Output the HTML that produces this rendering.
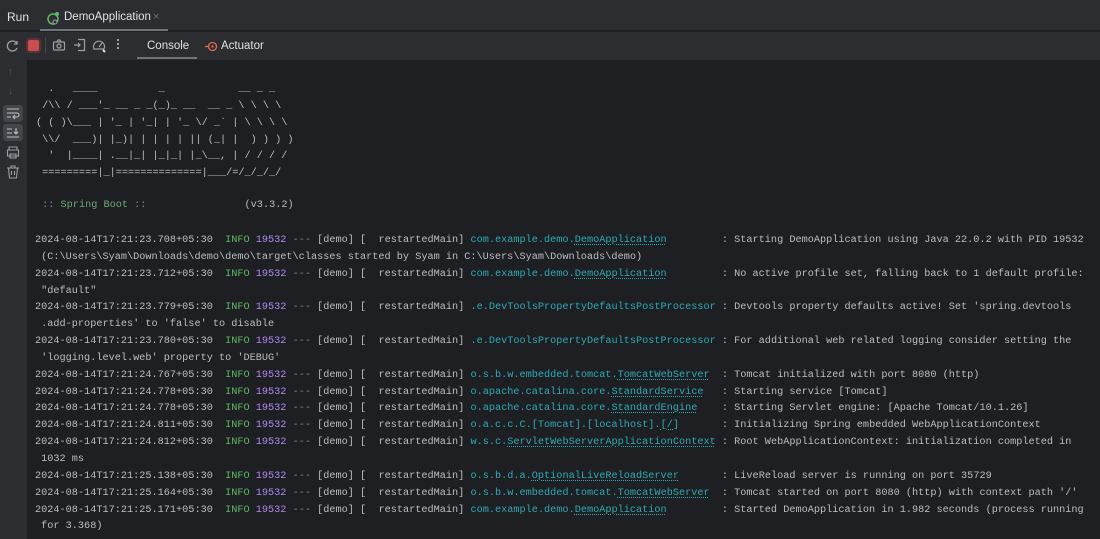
<!DOCTYPE html>
<html><head><meta charset="utf-8"><style>
*{margin:0;padding:0;box-sizing:border-box}
html,body{width:1100px;height:539px;overflow:hidden;background:#1e1f22}
body{position:relative;font-family:"Liberation Sans",sans-serif;color:#dfe1e5}
.hdr{position:absolute;left:0;top:0;width:1100px;height:31px;background:#2b2d30;border-bottom:1px solid #1e1f22}
.tb{position:absolute;left:0;top:32px;width:1100px;height:28px;background:#2b2d30}
.gut{position:absolute;left:0;top:60px;width:27px;height:479px;background:#2b2d30}
pre{position:absolute;font-family:"Liberation Mono",monospace;font-size:10.23px;line-height:16.85px;color:#bcbec4;white-space:pre}
.i{color:#5fb865}.p{color:#b189f5}.c{color:#2aacb8}.d{color:#868a91}.g{color:#6aab73}
.u{text-decoration:underline dotted;text-underline-offset:2px}
svg{position:absolute}
</style></head><body>
<div class="hdr"></div>
<div style="position:absolute;left:7px;top:10px;font-size:12px;color:#dfe1e5">Run</div>
<svg style="left:45px;top:10px" width="16" height="16" viewBox="0 0 16 16"><circle cx="8" cy="9" r="5" fill="none" stroke="#5fb865" stroke-width="1.5"/><circle cx="12" cy="4" r="2" fill="#5fb865"/><circle cx="10" cy="12" r="2" fill="#2b2d30" stroke="#9da0a8"/></svg>
<div style="position:absolute;left:64px;top:11px;font-size:11.5px;color:#dfe1e5">DemoApplication</div>
<div style="position:absolute;left:153px;top:11px;font-size:11px;color:#6f737a">×</div>
<div style="position:absolute;left:40px;top:29px;width:128px;height:2px;background:#6f737a"></div>
<div class="tb"></div>
<svg style="left:6px;top:39px" width="14" height="14" viewBox="0 0 14 14"><path d="M11 5A5 5 0 1 0 11 9" fill="none" stroke="#9da0a8" stroke-width="1.3"/><path d="M11 2v3H8" fill="none" stroke="#9da0a8" stroke-width="1.3"/></svg>
<div style="position:absolute;left:28px;top:40px;width:11px;height:11px;background:#c94f4f;border-radius:2px;box-shadow:0 0 0 2px #5a3236"></div>
<div style="position:absolute;left:45px;top:37px;width:1px;height:16px;background:#43454a"></div>
<svg style="left:52px;top:38px" width="14" height="14" viewBox="0 0 14 14"><rect x="1.5" y="4" width="11" height="8" rx="1" fill="none" stroke="#9da0a8" stroke-width="1.2"/><circle cx="7" cy="8" r="2" fill="none" stroke="#9da0a8" stroke-width="1.2"/><path d="M5 4l1-2h2l1 2" fill="none" stroke="#9da0a8" stroke-width="1.2"/></svg>
<svg style="left:73px;top:38px" width="14" height="14" viewBox="0 0 14 14"><path d="M5 1.5h6.5v11H5M1 7h6M5 5l2 2-2 2" fill="none" stroke="#9da0a8" stroke-width="1.2"/></svg>
<svg style="left:92px;top:38px" width="15" height="15" viewBox="0 0 15 15"><path d="M2 11a5.5 5.5 0 1 1 10 0z" fill="none" stroke="#9da0a8" stroke-width="1.2"/><path d="M7 9l3-4" stroke="#9da0a8" stroke-width="1.2"/><path d="M11 12l2 2" stroke="#dfe1e5" stroke-width="2"/></svg>
<div style="position:absolute;left:117px;top:39px;width:2px;font-size:0">
<div style="width:2px;height:2px;background:#9da0a8;margin-bottom:2px"></div><div style="width:2px;height:2px;background:#9da0a8;margin-bottom:2px"></div><div style="width:2px;height:2px;background:#9da0a8"></div></div>
<div style="position:absolute;left:147px;top:40px;font-size:11.5px;color:#dfe1e5">Console</div>
<div style="position:absolute;left:137px;top:57px;width:60px;height:2px;background:#6f737a"></div>
<svg style="left:205px;top:40px" width="13" height="13" viewBox="0 0 13 13"><path d="M0 6.5h4" stroke="#e06c4f" stroke-width="1.3"/><circle cx="7.5" cy="6.5" r="4" fill="none" stroke="#e06c4f" stroke-width="1.3"/><circle cx="7.5" cy="6.5" r="1.2" fill="#e06c4f"/></svg>
<div style="position:absolute;left:221px;top:40px;font-size:11.5px;color:#dfe1e5">Actuator</div>
<div class="gut"></div>
<div style="position:absolute;left:8px;top:66px;color:#4e5157;font-size:11px">↑</div>
<div style="position:absolute;left:8px;top:85px;color:#4e5157;font-size:11px">↓</div>
<div style="position:absolute;left:3px;top:105px;width:20px;height:17px;background:#43454a;border-radius:3px"></div>
<svg style="left:6px;top:107px" width="14" height="13" viewBox="0 0 14 13"><path d="M1 2h12M1 6h10a2 2 0 0 1 0 4H8M1 10h4M9 8l-2 2 2 2" fill="none" stroke="#bcbec4" stroke-width="1.1"/></svg>
<div style="position:absolute;left:3px;top:124px;width:20px;height:17px;background:#43454a;border-radius:3px"></div>
<svg style="left:6px;top:126px" width="14" height="13" viewBox="0 0 14 13"><path d="M1 3h5M1 7h5M1 11h12M10 2v6M8 6l2 2 2-2" fill="none" stroke="#bcbec4" stroke-width="1.1"/></svg>
<svg style="left:6px;top:146px" width="14" height="13" viewBox="0 0 14 13"><path d="M3 4V1h8v3M1.5 4h11v6h-11zM4 8h6v4H4z" fill="none" stroke="#9da0a8" stroke-width="1.1"/></svg>
<svg style="left:6px;top:165px" width="14" height="14" viewBox="0 0 14 14"><path d="M1 3h12M5 3V1h4v2M2.5 3l1 10h7l1-10M5.5 6v4M8.5 6v4" fill="none" stroke="#9da0a8" stroke-width="1.1"/></svg>
<pre style="left:36px;top:81px">  .   ____          _            __ _ _
 /\\ / ___'_ __ _ _(_)_ __  __ _ \ \ \ \
( ( )\___ | '_ | '_| | '_ \/ _` | \ \ \ \
 \\/  ___)| |_)| | | | | || (_| |  ) ) ) )
  '  |____| .__|_| |_|_| |_\__, | / / / /
 =========|_|==============|___/=/_/_/_/</pre>
<pre style="left:36px;top:197px"><span class="d"> ::</span> <span class="g">Spring Boot</span> <span class="d">::</span>                <span>(v3.3.2)</span></pre>
<pre style="left:35px;top:232px">2024-08-14T17:21:23.708+05:30  <span class="i">INFO</span> <span class="p">19532</span> <span class="d">---</span> [demo] [  restartedMain] <span class="c">com.example.demo.<span class="u">DemoApplication</span></span>         : Starting DemoApplication using Java 22.0.2 with PID 19532
 (C:\Users\Syam\Downloads\demo\demo\target\classes started by Syam in C:\Users\Syam\Downloads\demo)
2024-08-14T17:21:23.712+05:30  <span class="i">INFO</span> <span class="p">19532</span> <span class="d">---</span> [demo] [  restartedMain] <span class="c">com.example.demo.<span class="u">DemoApplication</span></span>         : No active profile set, falling back to 1 default profile:
 "default"
2024-08-14T17:21:23.779+05:30  <span class="i">INFO</span> <span class="p">19532</span> <span class="d">---</span> [demo] [  restartedMain] <span class="c">.e.DevToolsPropertyDefaultsPostProcessor</span> : Devtools property defaults active! Set 'spring.devtools
 .add-properties' to 'false' to disable
2024-08-14T17:21:23.780+05:30  <span class="i">INFO</span> <span class="p">19532</span> <span class="d">---</span> [demo] [  restartedMain] <span class="c">.e.DevToolsPropertyDefaultsPostProcessor</span> : For additional web related logging consider setting the
 'logging.level.web' property to 'DEBUG'
2024-08-14T17:21:24.767+05:30  <span class="i">INFO</span> <span class="p">19532</span> <span class="d">---</span> [demo] [  restartedMain] <span class="c">o.s.b.w.embedded.tomcat.<span class="u">TomcatWebServer</span></span>  : Tomcat initialized with port 8080 (http)
2024-08-14T17:21:24.778+05:30  <span class="i">INFO</span> <span class="p">19532</span> <span class="d">---</span> [demo] [  restartedMain] <span class="c">o.apache.catalina.core.<span class="u">StandardService</span></span>   : Starting service [Tomcat]
2024-08-14T17:21:24.778+05:30  <span class="i">INFO</span> <span class="p">19532</span> <span class="d">---</span> [demo] [  restartedMain] <span class="c">o.apache.catalina.core.<span class="u">StandardEngine</span></span>    : Starting Servlet engine: [Apache Tomcat/10.1.26]
2024-08-14T17:21:24.811+05:30  <span class="i">INFO</span> <span class="p">19532</span> <span class="d">---</span> [demo] [  restartedMain] <span class="c">o.a.c.c.C.[Tomcat].[localhost].<span class="u">[/]</span></span>       : Initializing Spring embedded WebApplicationContext
2024-08-14T17:21:24.812+05:30  <span class="i">INFO</span> <span class="p">19532</span> <span class="d">---</span> [demo] [  restartedMain] <span class="c">w.s.c.<span class="u">ServletWebServerApplicationContext</span></span> : Root WebApplicationContext: initialization completed in
 1032 ms
2024-08-14T17:21:25.138+05:30  <span class="i">INFO</span> <span class="p">19532</span> <span class="d">---</span> [demo] [  restartedMain] <span class="c">o.s.b.d.a.<span class="u">OptionalLiveReloadServer</span></span>       : LiveReload server is running on port 35729
2024-08-14T17:21:25.164+05:30  <span class="i">INFO</span> <span class="p">19532</span> <span class="d">---</span> [demo] [  restartedMain] <span class="c">o.s.b.w.embedded.tomcat.<span class="u">TomcatWebServer</span></span>  : Tomcat started on port 8080 (http) with context path '/'
2024-08-14T17:21:25.171+05:30  <span class="i">INFO</span> <span class="p">19532</span> <span class="d">---</span> [demo] [  restartedMain] <span class="c">com.example.demo.<span class="u">DemoApplication</span></span>         : Started DemoApplication in 1.982 seconds (process running
 for 3.368)</pre>
</body></html>
